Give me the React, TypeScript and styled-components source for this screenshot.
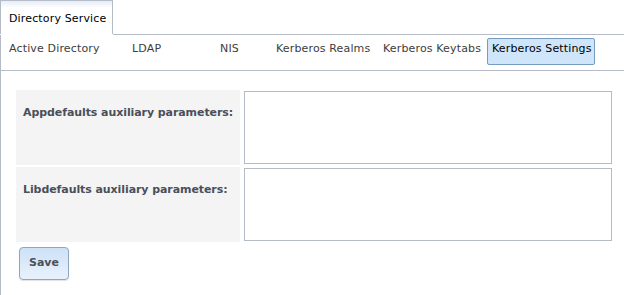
import React from 'react';
import styled, { createGlobalStyle } from 'styled-components';

const GlobalStyle = createGlobalStyle`
  html, body {
    margin: 0;
    padding: 0;
    background: #fff;
  }
  body {
    font-family: 'DejaVu Sans', Verdana, sans-serif;
    font-size: 11px;
  }
`;

const Page = styled.div`
  width: 624px;
  height: 295px;
  overflow: hidden;
  background: #fff;
  display: flex;
  flex-direction: column;
`;

const TopStrip = styled.div`
  display: flex;
  height: 35px;
`;

const TopTab = styled.div`
  width: 113px;
  height: 34px;
  border: 1px solid #b5bcc7;
  border-bottom: none;
  background: linear-gradient(#e6eef8 0, #ffffff 7px);
  padding: 10px 0 0 8px;
  box-sizing: border-box;
  line-height: 16px;
  letter-spacing: 0.15px;
  color: #000;
  flex-shrink: 0;
`;

const TopFiller = styled.div`
  flex: 1;
  border-bottom: 1px solid #b5bcc7;
`;

const Panel = styled.div`
  flex: 1;
  border-left: 1px solid #b5bcc7;
  display: flex;
  flex-direction: column;
`;

const SubBar = styled.div`
  display: flex;
  align-items: flex-start;
  height: 35px;
  padding-left: 3px;
  border-bottom: 1px solid #b5bcc7;
`;

const SubTab = styled.div<{ $w: number; $active?: boolean }>`
  width: ${p => p.$w}px;
  flex-shrink: 0;
  box-sizing: border-box;
  margin-top: 3px;
  height: 27px;
  padding: 2px 4px 0;
  line-height: 16px;
  letter-spacing: 0.15px;
  white-space: nowrap;
  border: 1px solid ${p => (p.$active ? '#769dc0' : 'transparent')};
  border-radius: 2px;
  background: ${p => (p.$active ? '#cfe5fa' : 'transparent')};
  color: ${p => (p.$active ? '#000' : '#3d3d3d')};
`;

const Form = styled.div`
  padding: 19px 0 0 15px;
`;

const Grid = styled.div`
  display: grid;
  grid-template-columns: 224px 368px;
  grid-auto-rows: 75px;
  column-gap: 4px;
  row-gap: 2px;
`;

const Label = styled.div`
  background: #f4f4f4;
  padding: 15px 0 0 7px;
  line-height: 16px;
  font-weight: bold;
  letter-spacing: -0.08px;
  color: #4a4f5a;
  white-space: nowrap;
`;

const Area = styled.textarea`
  margin: 1px 0;
  height: 73px;
  box-sizing: border-box;
  border: 1px solid #b5bcc7;
  resize: none;
  font-family: inherit;
  font-size: 11px;
  outline: none;
`;

const SaveButton = styled.button`
  margin: 5px 0 0 3px;
  width: 50px;
  height: 33px;
  box-sizing: border-box;
  border: 1px solid #8fa6c1;
  border-radius: 4px;
  background: linear-gradient(#cde1f6, #e9f2fc);
  box-shadow: 0 1px 1px rgba(0, 0, 0, 0.12);
  font-family: inherit;
  font-size: 11px;
  font-weight: bold;
  color: #4a4f5a;
  padding: 0 0 3px;
`;

const tabs = [
  { label: 'Active Directory', w: 123 },
  { label: 'LDAP', w: 88 },
  { label: 'NIS', w: 56 },
  { label: 'Kerberos Realms', w: 107 },
  { label: 'Kerberos Keytabs', w: 109 },
  { label: 'Kerberos Settings', w: 108, active: true },
];

const App: React.FC = () => {
  return (
    <>
      <GlobalStyle />
      <Page>
        <TopStrip>
          <TopTab>Directory Service</TopTab>
          <TopFiller />
        </TopStrip>
        <Panel>
          <SubBar>
            {tabs.map(t => (
              <SubTab key={t.label} $w={t.w} $active={t.active}>
                {t.label}
              </SubTab>
            ))}
          </SubBar>
          <Form>
            <Grid>
              <Label>Appdefaults auxiliary parameters:</Label>
              <Area />
              <Label>Libdefaults auxiliary parameters:</Label>
              <Area />
            </Grid>
            <SaveButton>Save</SaveButton>
          </Form>
        </Panel>
      </Page>
    </>
  );
};

export default App;
